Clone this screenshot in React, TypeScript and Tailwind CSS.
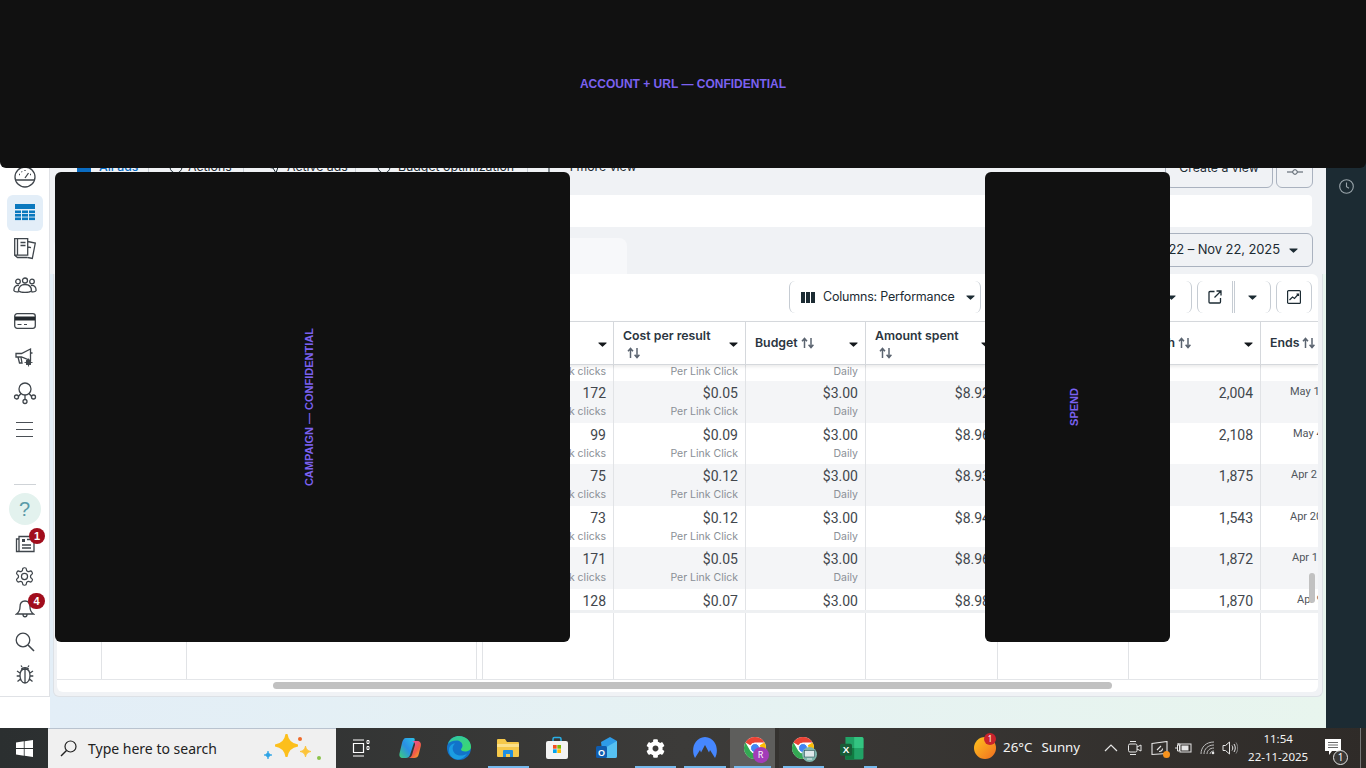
import React from 'react';
import { FaCog } from 'react-icons/fa';

const grid = 'grid grid-cols-[45px_85px_290px_6px_131px_132px_120px_132px_131px_132px_57px]';

const Caret = ({ className = '' }: { className?: string }) => (
  <svg width="9" height="5" viewBox="0 0 10 6" className={className}><path d="M0.6 0.5h8.8c.5 0 .7.5.4.9L5.5 5.4c-.3.3-.7.3-1 0L.2 1.4C-.1 1 .1.5.6.5z" fill="currentColor" /></svg>
);
const Sort = () => (
  <svg width="14" height="12" viewBox="0 0 14 12" className="shrink-0 text-[#5b6470]"><path d="M3.5 11V2M1 4.2 3.5 1.4 6 4.2M10 1v9M7.6 7.8 10 10.6l2.4-2.8" fill="none" stroke="currentColor" strokeWidth="1.5" /></svg>
);

const rows = [
  { a: '172', c: '$0.05', s: '$8.92', r: '2,004', e: 'May 1', p: 'pl-[29px]' },
  { a: '99', c: '$0.09', s: '$8.96', r: '2,108', e: 'May 4', p: 'pl-[32px]' },
  { a: '75', c: '$0.12', s: '$8.93', r: '1,875', e: 'Apr 2', p: 'pl-[30px]' },
  { a: '73', c: '$0.12', s: '$8.94', r: '1,543', e: 'Apr 20', p: 'pl-[29px]' },
  { a: '171', c: '$0.05', s: '$8.96', r: '1,872', e: 'Apr 1', p: 'pl-[31px]' },
];

const Cell = ({ main, sub, line = true }: { main?: string; sub?: string; line?: boolean }) => (
  <div className={`flex flex-col items-end pr-[7px] pt-[4px] overflow-hidden whitespace-nowrap ${line ? 'border-r border-[#e1e3e6]' : ''}`}>
    {main && <span className="font-['Roboto',sans-serif] text-[14px] leading-[16px] text-[#42474d]">{main}</span>}
    {sub && <span className="mt-[4px] text-[10.5px] leading-[14px] text-[#8a8f96]">{sub}</span>}
  </div>
);

const Row = ({ r, i }: { r: (typeof rows)[number]; i: number }) => (
  <div className={`${grid} ${i % 2 === 0 ? 'bg-[#f4f5f7]' : 'bg-white'} ${i % 2 === 0 ? 'h-[42px]' : 'h-[41px]'}`}>
    <div className="border-r border-[#e1e3e6]" /><div className="border-r border-[#e1e3e6]" /><div /><div className="bg-[#eceef0]" />
    <Cell main={r.a} sub="Link clicks" />
    <Cell main={r.c} sub="Per Link Click" />
    <Cell main="$3.00" sub="Daily" />
    <Cell main={r.s} />
    <Cell />
    <Cell main={r.r} />
    <div className={`${r.p} pt-[4px] font-['Roboto',sans-serif] text-[11px] leading-[14px] text-[#50555b] whitespace-nowrap overflow-hidden`}>{r.e}</div>
  </div>
);

const HeadCell = ({ label, two }: { label: string; two?: boolean }) => (
  <div className="flex items-center justify-between pl-[9px] pr-[7px] border-r border-[#d5d8dc] overflow-hidden whitespace-nowrap">
    {two ? (
      <div className="flex flex-col gap-[3px] pt-px">
        <span className="text-[12.3px] leading-[16px] font-semibold text-[#2b3540]">{label}</span>
        <span className="pl-[4px]"><Sort /></span>
      </div>
    ) : (
      <div className="flex items-center gap-[3px]">
        <span className="text-[12.3px] leading-[16px] font-semibold text-[#2b3540]">{label}</span>
        <Sort />
      </div>
    )}
    <Caret className="mt-[3px] shrink-0 text-[#14181c]" />
  </div>
);

const S = 'fill-none stroke-[#3f454b] stroke-[1.3]';

const Sidebar = () => (
  <div className="w-[50px] shrink-0 bg-white flex flex-col">
    <div className="h-[697px] border-b border-r border-[#e0e2e6] flex flex-col items-center pt-[159px]">
      <div className="h-[36px] w-full flex items-center justify-center">
        <svg width="22" height="22" viewBox="0 0 22 22" className={S}><circle cx="11" cy="11" r="10" /><path d="M2 14h18M11 12l3.5-5M5 8.5h1M7.5 5.5l.6.6M11 4v1M17 8.5h-1" /></svg>
      </div>
      <div className="h-[36px] w-[36px] flex items-center justify-center rounded-md bg-[#e3eef8]">
        <svg width="20" height="18" viewBox="0 0 20 18"><rect x="0" y="0" width="20" height="5" fill="#0a78be" />
          {[6.5, 10, 13.5].map((y) => [0, 7, 14].map((x) => <rect key={`${x}${y}`} x={x} y={y} width="6" height="2.6" fill="#0a78be" />))}
        </svg>
      </div>
      <div className="h-[36px] w-full flex items-center justify-center">
        <svg width="22" height="22" viewBox="0 0 22 22" className={S}><path d="M.7.7h13v16.500h-13zM3.500.7v16.500M.7 17.200 3.500 19.500h10M13.700 3.500l7.600 1.500-3 15.500-4.600-1M6.500 4.500h5M6.500 7.500h5M14 9l3 .7" /></svg>
      </div>
      <div className="h-[36px] w-full flex items-center justify-center">
        <svg width="24" height="16" viewBox="0 0 24 16" className={S}><circle cx="5" cy="4.500" r="2.300" /><circle cx="12" cy="3.500" r="2.500" /><circle cx="19" cy="4.500" r="2.300" /><path d="M1 14c-.5-4 2-6 5-5.500M23 14c.5-4-2-6-5-5.500M5.500 14c0-5 3-6.500 6.500-6.500s6.500 1.500 6.500 6.500c-3 2-10 2-13 0zM1 14c1 .8 2.500 1 4.500 1M23 14c-1 .8-2.500 1-4.500 1" /></svg>
      </div>
      <div className="h-[36px] w-full flex items-center justify-center">
        <svg width="22" height="16" viewBox="0 0 22 16"><rect x=".7" y=".7" width="20.600" height="14.600" rx="2.500" fill="none" stroke="#3f454b" strokeWidth="1.300" /><rect x="1" y="3.500" width="20" height="4" fill="#23282d" /><path d="M3.500 11.500h4M10 11.500h3" stroke="#3f454b" strokeWidth="1" /></svg>
      </div>
      <div className="h-[36px] w-full flex items-center justify-center">
        <svg width="20" height="20" viewBox="0 0 20 20" className={S}><path d="M1 6.500h5.500L15.500 2v11.500l-9-3.500H1zM3 10l1.500 6h2.500L6 10.500M15.500 6h2" /><circle cx="13.500" cy="15.500" r="2" fill="#3f454b" /><path d="M13.500 11.500v8M9.500 15.500h8M11 13l5 5M16 13l-5 5" strokeWidth=".9" /></svg>
      </div>
      <div className="h-[36px] w-full flex items-center justify-center">
        <svg width="24" height="24" viewBox="0 0 24 24" className={S}><circle cx="12" cy="8" r="6" /><circle cx="3.500" cy="16" r="2" /><circle cx="20.500" cy="16" r="2" /><circle cx="12" cy="20.500" r="2" /><path d="M5.400 15.500 8 12.500M18.600 15.500 16 12.500M12 14v4.500" /></svg>
      </div>
      <div className="h-[36px] w-full flex items-center justify-center">
        <svg width="17" height="15" viewBox="0 0 17 15" className="fill-none stroke-[#4a4f55] stroke-[1]"><path d="M0 .5h17M0 7.500h17M0 14.500h17" /></svg>
      </div>
      <div className="h-[37px] shrink-0" />
      <div className="h-px w-[22px] bg-[#cfd3d7] shrink-0" />
      <div className="mt-[8px] h-[32px] w-[32px] shrink-0 rounded-full bg-[#e3f2ee] flex items-center justify-center text-[20px] leading-none font-normal text-[#5a9aa8] font-['Liberation_Sans',sans-serif]">?</div>
      <div className="mt-[3px] h-[32.5px] w-full relative flex items-center justify-center">
        <svg width="20" height="18" viewBox="0 0 20 18" className={S}><path d="M4 3.500V1.500h15v15H4zM4 4H1.500v12.500H4" /><rect x="7" y="4" width="3" height="3" fill="#3f454b" stroke="none" /><path d="M7 10h9M7 13h9M12 4.500h4" /></svg>
        <span className="absolute left-[29px] top-[0px] w-[16px] h-[16px] rounded-full bg-[#a10d1c] text-white text-[11px] leading-[16px] font-bold text-center font-['Liberation_Sans',sans-serif]">1</span>
      </div>
      <div className="h-[32.5px] w-full flex items-center justify-center">
        <svg width="21" height="21" viewBox="0 0 24 24" className="fill-none stroke-[#3f454b] stroke-[1.400]"><path d="M12.220 2h-.44a2 2 0 0 0-2 2v.18a2 2 0 0 1-1 1.730l-.43.250a2 2 0 0 1-2 0l-.15-.080a2 2 0 0 0-2.730.730l-.220.380a2 2 0 0 0 .730 2.730l.150.100a2 2 0 0 1 1 1.720v.510a2 2 0 0 1-1 1.740l-.150.090a2 2 0 0 0-.730 2.730l.220.380a2 2 0 0 0 2.730.730l.150-.080a2 2 0 0 1 2 0l.430.250a2 2 0 0 1 1 1.730V20a2 2 0 0 0 2 2h.440a2 2 0 0 0 2-2v-.180a2 2 0 0 1 1-1.730l.430-.250a2 2 0 0 1 2 0l.150.080a2 2 0 0 0 2.730-.730l.220-.390a2 2 0 0 0-.730-2.730l-.150-.080a2 2 0 0 1-1-1.740v-.500a2 2 0 0 1 1-1.740l.150-.090a2 2 0 0 0 .730-2.730l-.220-.380a2 2 0 0 0-2.730-.730l-.150.080a2 2 0 0 1-2 0l-.430-.250a2 2 0 0 1-1-1.730V4a2 2 0 0 0-2-2z" /><circle cx="12" cy="12" r="3.500" /></svg>
      </div>
      <div className="h-[32.5px] w-full relative flex items-center justify-center">
        <svg width="20" height="20" viewBox="0 0 20 20" className={S}><path d="M10 2c-3.500 0-5 2.500-5 6 0 4-2 6-3.500 7h17c-1.500-1-3.500-3-3.500-7 0-3.500-1.500-6-5-6zM8 15.500c0 3 4 3 4 0" /></svg>
        <span className="absolute left-[28px] top-[0px] w-[17px] h-[16px] rounded-full bg-[#a10d1c] text-white text-[11px] leading-[16px] font-bold text-center font-['Liberation_Sans',sans-serif]">4</span>
      </div>
      <div className="h-[32.5px] w-full flex items-center justify-center">
        <svg width="20" height="20" viewBox="0 0 20 20" className={S}><circle cx="8" cy="8" r="6.800" /><path d="m13 13 6 6" strokeWidth="1.600" /></svg>
      </div>
      <div className="h-[32.5px] w-full flex items-center justify-center">
        <svg width="18" height="20" viewBox="0 0 18 20" className={S}><path d="M9 5c-3.500 0-5 2.500-5 6.500S6 19 9 19s5-3.500 5-7.500S12.500 5 9 5zM9 5v14M5.500 5.500C6 3 12 3 12.500 5.500M6 3 5 1.500M12 3l1-1.500M4 9 1 7M14 9l3-2M4 12H.7M14 12h3.300M4.500 15 1.500 17.500M13.500 15l3 2.500" /></svg>
      </div>
    </div>
  </div>
);

const TabItem = ({ w, label, blue, icon }: { w: string; label: string; blue?: boolean; icon: React.ReactNode }) => (
  <div className={`${w} h-[24px] flex items-center border-r border-[#c9ced6] whitespace-nowrap text-[12.3px] ${blue ? 'text-[#0a6cc2] font-medium' : 'text-[#1c2b33]'}`}>{icon}<span>{label}</span></div>
);

const Center = () => (
  <div className="w-[1276px] shrink-0 h-[728px] flex flex-col bg-linear-to-r from-[#e3eef7] to-[#e8f5ee]">
    <div className="h-[274px] shrink-0 bg-[#f0f2f5] flex flex-col">
      <div className="h-[155px] shrink-0" />
      <div className="h-[33px] shrink-0 flex items-start pl-[27px]">
        <TabItem w="w-[72px]" label="All ads" blue icon={<svg width="14" height="14" viewBox="0 0 14 14" className="mr-[8px]"><rect width="14" height="14" rx="2" fill="#0a6cc2" /></svg>} />
        <TabItem w="w-[95px] pl-[20px]" label="Actions" icon={<svg width="14" height="14" viewBox="0 0 14 14" className="mr-[5px] fill-none stroke-[#1c2b33]"><circle cx="7" cy="7" r="6" /></svg>} />
        <TabItem w="w-[112px] pl-[21px]" label="Active ads" icon={<svg width="16" height="14" viewBox="0 0 16 14" className="mr-[6px] fill-none stroke-[#1c2b33]"><path d="M1 7 15 1l-4 12-3-5z" /></svg>} />
        <TabItem w="w-[172px] pl-[20px]" label="Budget optimization" icon={<svg width="16" height="14" viewBox="0 0 16 14" className="mr-[6px] fill-none stroke-[#1c2b33]"><circle cx="8" cy="7" r="6" /></svg>} />
        <div className="h-[24px] pl-[15px] flex items-center gap-[13px] text-[12.3px] text-[#1c2b33] whitespace-nowrap">
          <svg width="12" height="12" viewBox="0 0 12 12" className="fill-none stroke-[#1c2b33]"><path d="M6 0v12M0 6h12" /></svg><span>1 more view</span>
        </div>
        <div className="ml-auto flex items-start">
          <div className="h-[33px] w-[108px] rounded-md border border-[#aab2bf] flex items-center justify-center pb-[6px] text-[12.3px] text-[#1c2b33]">Create a view</div>
          <div className="ml-[3px] mr-[13px] h-[33px] w-[37px] rounded-md border border-[#aab2bf] flex items-center justify-center">
            <svg width="16" height="8" viewBox="0 0 16 8" className="fill-none stroke-[#4a5560]"><path d="M0 4h5.500M10.500 4H16" /><circle cx="8" cy="4" r="2.300" /></svg>
          </div>
        </div>
      </div>
      <div className="h-[7px] shrink-0" />
      <div className="h-[32px] shrink-0 ml-[5px] mr-[14px] bg-white rounded-sm" />
      <div className="h-[47px] shrink-0 flex justify-between">
        <div className="self-end ml-[4px] w-[573px] h-[36px] rounded-t-lg bg-[#f7f8fa]" />
        <div className="mt-[6px] mr-[13px] h-[34px] w-[328px] rounded-md border border-[#aab2bf] flex items-center justify-end pr-[14px] gap-[9px] text-[13px] tracking-[-0.1px] text-[#1c2b33] whitespace-nowrap">
          <span>Jan 1, 2022 – Nov 22, 2025</span><Caret className="text-[#1c2b33]" />
        </div>
      </div>
    </div>
    <div className="h-[423px] shrink-0 ml-[3px] w-[1270px] bg-[#f0f2f5] border-x border-b border-[#dde1e6] rounded-b-md pl-[3px] pr-[4px] pb-[4px]">
      <div className="relative h-[418px] w-[1261px] bg-white rounded-t-md rounded-b-md overflow-hidden flex flex-col">
        <div className="h-[47px] shrink-0 pb-[1px] flex items-center justify-end pr-[6px] gap-[5px] text-[12.5px] tracking-[-0.2px] text-[#1c2b33]">
          <div className="w-[192px] h-[32px] shrink-0 rounded-md border-x border-[#c6ccd3] flex items-center pl-[11px] gap-[8px] whitespace-nowrap">
            <svg width="14" height="11" viewBox="0 0 14 11" className="fill-[#1c2b33] shrink-0"><rect width="4" height="11" /><rect x="5" width="4" height="11" /><rect x="10" width="4" height="11" /></svg>
            <span>Columns: Performance</span>
            <Caret className="ml-[3px] text-[#1c2b33]" />
          </div>
          <div className="w-[206px] h-[32px] shrink-0 rounded-md border-x border-[#c6ccd3] flex items-center justify-end pr-[15px]"><Caret className="text-[#1c2b33]" /></div>
          <div className="w-[74px] h-[32px] shrink-0 rounded-md border-x border-[#c6ccd3] flex items-center">
            <div className="w-[37px] h-full flex items-center justify-center border-r-[3px] border-double border-[#c6ccd3]">
              <svg width="14" height="14" viewBox="0 0 14 14" className="fill-none stroke-[#1c2b33] stroke-[1.300]"><path d="M6.500 1.500H2a1 1 0 0 0-1 1V12a1 1 0 0 0 1 1h9.500a1 1 0 0 0 1-1V8M8.500 1H13v4.500M13 1 6.500 7.500" /></svg>
            </div>
            <div className="flex-1 flex items-center justify-center"><Caret className="text-[#1c2b33]" /></div>
          </div>
          <div className="w-[36px] h-[32px] shrink-0 rounded-md border-x border-[#c6ccd3] flex items-center justify-center">
            <svg width="14" height="14" viewBox="0 0 14 14" className="fill-none stroke-[#1c2b33] stroke-[1.200]"><rect x=".6" y=".6" width="12.800" height="12.800" rx="1" /><path d="m2.500 10 3-3 2 1.500 4-4.500M9.500 4h2v2" /></svg>
          </div>
        </div>
        <div className={`${grid} h-[44px] shrink-0 border-y border-[#d5d8dc] shadow-[0_2px_3px_rgba(0,0,0,0.08)] z-10 bg-white`}>
          <div className="border-r border-[#d5d8dc]" /><div className="border-r border-[#d5d8dc]" /><div /><div className="bg-[#eceef0]" />
          <div className="flex items-center justify-end pr-[6px] border-r border-[#d5d8dc]"><Caret className="mt-[3px] text-[#14181c]" /></div>
          <HeadCell label="Cost per result" two />
          <HeadCell label="Budget" />
          <HeadCell label="Amount spent" two />
          <HeadCell label="Impressions" />
          <HeadCell label="Reach" />
          <div className="flex items-center pl-[9px] gap-[3px] overflow-hidden"><span className="text-[12.3px] font-semibold text-[#2b3540]">Ends</span><Sort /></div>
        </div>
        <div className={`${grid} h-[16px] shrink-0 overflow-hidden bg-white`}>
          <div className="border-r border-[#e1e3e6]" /><div className="border-r border-[#e1e3e6]" /><div /><div className="bg-[#eceef0]" />
          {['Link clicks', 'Per Link Click', 'Daily', '', '', ''].map((t, i) => (
            <div key={i} className="border-r border-[#e1e3e6] flex items-end justify-end pr-[7px] pb-[4px] text-[10.5px] leading-[14px] text-[#8a8f96] whitespace-nowrap">{t}</div>
          ))}
          <div />
        </div>
        {rows.map((r, i) => <Row key={i} r={r} i={i} />)}
        <div className={`${grid} h-[21px] shrink-0 bg-white overflow-hidden`}>
          <div className="border-r border-[#e1e3e6]" /><div className="border-r border-[#e1e3e6]" /><div /><div className="bg-[#eceef0]" />
          <Cell main="128" />
          <Cell main="$0.07" />
          <Cell main="$3.00" />
          <Cell main="$8.98" />
          <Cell />
          <Cell main="1,870" />
          <div className="pl-[36px] pt-[4px] font-['Roboto',sans-serif] text-[11px] leading-[14px] text-[#50555b] whitespace-nowrap overflow-hidden">Apr 9</div>
        </div>
        <div className={`${grid} h-[69px] shrink-0 border-t-3 border-t-[#eef0f2]`}>
          <div className="border-r border-[#e1e3e6]" /><div className="border-r border-[#e1e3e6]" /><div className="border-r border-[#e1e3e6]" /><div className="border-r border-[#e1e3e6]" />
          <div className="border-r border-[#e1e3e6]" /><div className="border-r border-[#e1e3e6]" /><div className="border-r border-[#e1e3e6]" /><div className="border-r border-[#e1e3e6]" /><div className="border-r border-[#e1e3e6]" /><div className="border-r border-[#e1e3e6]" /><div />
        </div>
        <div className="flex-1 border-t border-[#e4e6e9] pt-[2px] pl-[216px]">
          <div className="h-[7px] w-[839px] rounded-full bg-[#c1c1c1]" />
        </div>
        <div className="absolute left-[1252px] top-[299px] w-[6px] h-[30px] rounded-full bg-[#c1c1c1] z-20" />
      </div>
    </div>
  </div>
);

const Star = ({ s, c }: { s: number; c: string }) => (
  <svg width={s} height={s} viewBox="0 0 24 24"><path d="M12 0C13 7 17 11 24 12 17 13 13 17 12 24 11 17 7 13 0 12 7 11 11 7 12 0Z" fill={c} stroke={c} strokeWidth="2" strokeLinejoin="round" /></svg>
);

const Chrome = () => (
  <svg width="24" height="24" viewBox="0 0 24 24">
    <circle cx="12" cy="12" r="11" fill="#fff" />
    <path d="M2.470 6.500A11 11 0 0 1 21.530 6.500L12 6.500A5.500 5.500 0 0 0 7.240 9.250Z" fill="#ea4335" />
    <path d="M2.470 6.500A11 11 0 0 1 21.530 6.500L12 6.500A5.500 5.500 0 0 0 7.240 9.250Z" fill="#fbbc04" transform="rotate(120 12 12)" />
    <path d="M2.470 6.500A11 11 0 0 1 21.530 6.500L12 6.500A5.500 5.500 0 0 0 7.240 9.250Z" fill="#34a853" transform="rotate(240 12 12)" />
    <circle cx="12" cy="12" r="4.500" fill="#4285f4" stroke="#fff" strokeWidth="1" />
  </svg>
);

const Slot = ({ children, bar, active }: { children: React.ReactNode; bar?: string; active?: boolean }) => (
  <div className={`w-[49.2px] h-full shrink-0 relative flex items-center justify-center ${active ? 'bg-[#5e5e5c] border-r-[4px] border-[#34322f]' : ''}`}>
    {children}
    {bar && <span className={`absolute bottom-0 left-[4px] right-[4px] h-[2px] ${bar}`} />}
  </div>
);

const Taskbar = () => (
  <div className="h-[40px] shrink-0 bg-linear-to-r from-[#2b2f30] via-[#3c3b39] to-[#2f2b28] flex items-stretch text-white font-['Noto_Sans',sans-serif]">
    <div className="w-[48px] flex items-center justify-center">
      <svg width="17" height="17" viewBox="0 0 17 17" fill="#fff"><path d="M0 2.400 7.800 1.300v6.800H0zM8.600 1.200 17 0v8.100H8.600zM0 8.900h7.800v6.800L0 14.600zM8.600 8.900H17V17l-8.400-1.200z" /></svg>
    </div>
    <div className="w-[288px] bg-[#f0f0f0] border-t border-[#b9c3cf] flex items-center pl-[12px] text-[#222]">
      <svg width="17" height="17" viewBox="0 0 17 17" fill="none" stroke="#222" strokeWidth="1.200"><circle cx="10.500" cy="6.500" r="5.500" /><path d="M6.500 10.500 1 16" strokeWidth="1.500" /></svg>
      <span className="ml-[11px] text-[14px] whitespace-nowrap">Type here to search</span>
      <div className="relative ml-auto w-[74px] h-full">
        <span className="absolute left-[2px] top-[22px] flex"><Star s={8} c="#2ea3e6" /></span>
        <span className="absolute left-[13px] top-[5px] flex"><Star s={23} c="#fcbf1c" /></span>
        <span className="absolute left-[38px] top-[17px] flex"><Star s={11} c="#fcc43a" /></span>
        <span className="absolute left-[36px] top-[8px] w-[4px] h-[4px] rounded-full bg-[#ef6a2a]" />
        <span className="absolute left-[55px] top-[27px] w-[4px] h-[4px] rounded-full bg-[#8bc34a]" />
      </div>
    </div>
    <Slot>
      <svg width="18" height="18" viewBox="0 0 18 18" fill="none" stroke="#fff" strokeWidth="1.200"><path d="M1 1h11M1 17h11M1.500 4.500h10v9h-10z" /><path d="M15 1.500h2v3h-2zM15 7.500h2v3h-2z" strokeWidth="1" /></svg>
    </Slot>
    <Slot>
      <svg width="24" height="24" viewBox="0 0 24 24">
        <defs>
          <linearGradient id="cpa" x1="0" y1="1" x2="1" y2="0"><stop offset="0" stopColor="#3ecf7a" /><stop offset=".5" stopColor="#2a8fe6" /><stop offset="1" stopColor="#2dc3e8" /></linearGradient>
          <linearGradient id="cpb" x1="0" y1="0" x2="1" y2="1"><stop offset="0" stopColor="#e64ad0" /><stop offset=".6" stopColor="#f05a48" /><stop offset="1" stopColor="#fbbc1c" /></linearGradient>
        </defs>
        <path d="M8 2h7c2 0 2 1.500 1.500 3L12 19c-.6 2-2 3-4 3H5c-3 0-4-2-3.500-4.500L4 7c.7-3 2-5 4-5z" fill="url(#cpa)" />
        <path d="M13 5h6c3 0 4.500 2 3.800 5l-2 8c-.6 3-2.500 4-4.800 4H10c2 0 3.200-1 4-3l3-10c.4-1.600-1-4-4-4z" fill="url(#cpb)" />
      </svg>
    </Slot>
    <Slot>
      <svg width="26" height="26" viewBox="0 0 26 26">
        <defs><linearGradient id="edg" x1="0" y1="0" x2="1" y2="1"><stop offset="0" stopColor="#2fc4a8" /><stop offset="1" stopColor="#3ddc68" /></linearGradient></defs>
        <circle cx="13" cy="13" r="12" fill="#1273c9" />
        <path d="M2 9C4 3 9 1 13 1c7 0 12 5 12 11 0 3-3 4.500-6 4.500-2 0-4-.8-4-2 0-1 1.500-1.500 1.500-4 0-3-3-5-6-5-4 0-7 1.500-8.500 3.500z" fill="url(#edg)" />
        <path d="M9 24c-4-1.500-6-5-6-9 0-4 3-6.500 6-6.500-2 2-3 4-2 7 1 3.500 5 5.500 9 5 2-.2 4-1 5-2-2 4-7 7-12 5.500z" fill="#1b9de2" />
      </svg>
    </Slot>
    <Slot bar="bg-[#76b9ed]">
      <svg width="24" height="22" viewBox="0 0 24 22"><path d="M1 3a1 1 0 0 1 1-1h7l2 3h11a1 1 0 0 1 1 1v13a1 1 0 0 1-1 1H2a1 1 0 0 1-1-1z" fill="#f5c84a" /><path d="M1 7h22v3H1z" fill="#fbe08a" /><path d="M7 20v-6a1 1 0 0 1 1-1h8a1 1 0 0 1 1 1v6h-3v-3h-4v3z" fill="#1f8ee0" /></svg>
    </Slot>
    <Slot>
      <svg width="24" height="24" viewBox="0 0 24 24"><path d="M8 6V3a1.500 1.500 0 0 1 1.500-1.500h5A1.500 1.500 0 0 1 16 3v3" fill="none" stroke="#2ab0e8" strokeWidth="1.500" /><rect x="1" y="5" width="22" height="18" rx="2" fill="#f3f3f3" /><rect x="8" y="9" width="3.700" height="3.700" fill="#f25022" /><rect x="12.300" y="9" width="3.700" height="3.700" fill="#7fba00" /><rect x="8" y="13.300" width="3.700" height="3.700" fill="#00a4ef" /><rect x="12.300" y="13.300" width="3.700" height="3.700" fill="#ffb900" /></svg>
    </Slot>
    <Slot>
      <svg width="24" height="24" viewBox="0 0 24 24"><path d="M6 6 15 1l7 4v15a2 2 0 0 1-2 2H8z" fill="#2e9ce8" /><path d="M8 13 22 5v15a2 2 0 0 1-2 2H8z" fill="#56c1f2" /><rect x="1" y="10" width="11" height="12" rx="1.500" fill="#0f5cae" /><text x="6.500" y="19.500" textAnchor="middle" fontSize="9" fontWeight="700" fill="#fff" fontFamily="Liberation Sans, sans-serif">O</text></svg>
    </Slot>
    <Slot bar="bg-[#76b9ed]"><FaCog size={19} color="#fff" /></Slot>
    <Slot bar="bg-[#76b9ed]">
      <svg width="26" height="24" viewBox="0 0 26 24"><path d="M3 22C-1 15 1 2 13 1c12 1 14 14 10 21l-5-8-1 2.500-4-7.500-4 7.500-1-2.500z" fill="#4687ff" /></svg>
    </Slot>
    <Slot bar="bg-[#76b9ed]" active>
      <span className="relative flex ml-[6px] mr-[-1px] pr-[2px]"><Chrome />
        <span className="absolute left-[10px] top-[11px] w-[16px] h-[16px] rounded-full bg-[#a23cb8] text-[9px] leading-[16px] text-center text-white">R</span>
      </span>
    </Slot>
    <Slot bar="bg-[#76b9ed]">
      <span className="relative flex ml-[2px] pr-[2px]"><Chrome />
        <span className="absolute left-[11px] top-[11px] w-[15px] h-[15px] rounded-full bg-[#7fb6ad] flex items-center justify-center">
          <svg width="11" height="10" viewBox="0 0 11 10"><rect x=".5" y=".5" width="10" height="6.500" fill="#dfe8ea" stroke="#33575a" strokeWidth=".6" /><path d="M3 9h5" stroke="#e7eeef" /></svg>
        </span>
      </span>
    </Slot>
    <Slot>
      <svg width="24" height="24" viewBox="0 0 22 22"><path d="M5 1h15a1.500 1.500 0 0 1 1.500 1.500V20a1.500 1.500 0 0 1-1.500 1.500H5z" fill="#21a366" /><path d="M13 1h7a1.500 1.500 0 0 1 1.500 1.500V11H13z" fill="#33c481" /><path d="M5 11h8v10.500H5z" fill="#107c41" /><rect x="0" y="7" width="11" height="11" rx="1.500" fill="#185c37" /><text x="5.500" y="15.800" textAnchor="middle" fontSize="9" fontWeight="700" fill="#fff" fontFamily="Liberation Sans, sans-serif">X</text></svg>
      <span className="absolute bottom-0 left-[36px] right-0 h-[2px] bg-[#76b9ed]" />
    </Slot>
    <div className="w-[97px] shrink-0" />
    <div className="flex items-center text-[13.3px] whitespace-nowrap text-[#f3f3f3]">
      <span className="relative w-[22px] h-[22px] rounded-full bg-linear-to-br from-[#fdc41c] to-[#ef6c20]">
        <span className="absolute left-[10px] top-[-4px] w-[12px] h-[12px] rounded-full bg-[#c9232c] text-[8px] leading-[12px] text-center text-white">1</span>
      </span>
      <span className="ml-[7px]">26°C</span>
      <span className="ml-[9px]">Sunny</span>
    </div>
    <div className="ml-[22px] flex items-center gap-[6px]">
      <span className="w-[18px] flex justify-center"><svg width="14" height="8" viewBox="0 0 14 8" fill="none" stroke="#e6e6e6" strokeWidth="1.200"><path d="m1 7 6-6 6 6" /></svg></span>
      <span className="w-[18px] flex justify-center"><svg width="16" height="16" viewBox="0 0 16 16" fill="none" stroke="#e6e6e6" strokeWidth="1"><rect x="1.500" y="4" width="8.500" height="8" rx="1.500" /><path d="m10 7 4-2v6l-4-2M3 1.500h6M3 14.500h6" /></svg></span>
      <span className="w-[18px] flex justify-center"><span className="relative flex"><svg width="17" height="15" viewBox="0 0 17 15" fill="none" stroke="#e6e6e6" strokeWidth="1.100"><path d="M1 2.500 16 .5v12l-15 1z" /><path d="M6 9 10 5M8 10.500c2 0 3.500-1 3.500-3" /></svg><span className="absolute right-[-2px] bottom-[-2px] w-[7px] h-[7px] rounded-full bg-[#f7931e]" /></span></span>
      <span className="w-[18px] flex justify-center"><svg width="17" height="12" viewBox="0 0 17 12" fill="none" stroke="#e6e6e6" strokeWidth="1"><rect x="5" y="2" width="11" height="8" /><rect x="6.500" y="3.500" width="7" height="5" fill="#e6e6e6" stroke="none" /><path d="M0 6h3M2.500 3v6h2V3zM3 1v2M4 1v2" /></svg></span>
      <span className="w-[18px] flex justify-center"><svg width="15" height="14" viewBox="0 0 15 14" fill="none" stroke="#bdbdbd" strokeWidth="1"><path d="M1 13C1 6 6 1 14 1M4 13c0-5 4-9 10-9M7 13c0-3 2.500-6 7-6M10 13c0-1.500 1.500-3 4-3" /><circle cx="13" cy="12" r="1.300" fill="#e6e6e6" stroke="none" /></svg></span>
      <span className="w-[16px] flex justify-center"><svg width="16" height="14" viewBox="0 0 16 14" fill="none" stroke="#e6e6e6" strokeWidth="1"><path d="M1 4.500h2.500L7.500 1v12L3.500 9.500H1z" /><path d="M10 4.500c1 1.500 1 3.500 0 5M12 3c1.700 2.500 1.700 5.500 0 8" /><path d="M14 1.500c2.300 3.500 2.300 7.500 0 11" stroke="#8a8a8a" /></svg></span>
    </div>
    <div className="ml-[5px] w-[70px] flex flex-col items-center justify-center text-[11.5px] leading-[18px] text-[#f3f3f3] whitespace-nowrap">
      <span>11:54</span><span>22-11-2025</span>
    </div>
    <div className="relative ml-[12px] flex-1 border-r border-[#777] mr-[5px]">
      <svg width="17" height="17" viewBox="0 0 17 17" className="absolute left-0 top-[11px]"><path d="M0 0h16v12H7l-3 4v-4H0z" fill="#fff" /><path d="M3 3.500h10M3 6h10M3 8.500h10" stroke="#444" strokeWidth=".8" /></svg>
      <span className="absolute left-[8px] top-[22px] w-[15px] h-[15px] rounded-full border border-[#e6e6e6] bg-[#3a3836] text-[10px] leading-[13px] text-center">1</span>
    </div>
  </div>
);

export default function App() {
  return (
    <div className="relative w-[1366px] h-[768px] overflow-hidden flex flex-col font-['Inter',sans-serif]">
      <div className="h-[728px] shrink-0 flex">
        <Sidebar />
        <Center />
        <div className="flex-1 bg-[#1c2b33] flex justify-center pt-[179px]">
          <svg width="15" height="15" viewBox="0 0 15 15" fill="none" stroke="#9aa5ab" strokeWidth="1.100"><circle cx="7.500" cy="7.500" r="6.800" /><path d="M7.500 3.500v4.300l2.500 1.500" /></svg>
        </div>
      </div>
      <Taskbar />
      <div className="absolute left-0 top-0 w-[1366px] h-[168px] rounded-b-md bg-[#111111] flex items-center justify-center z-30 font-['Liberation_Sans',sans-serif] text-[12px] font-bold text-[#7b61f0]">ACCOUNT + URL — CONFIDENTIAL</div>
      <div className="absolute left-[55px] top-[172px] w-[515px] h-[470px] rounded-md bg-[#111111] flex items-center justify-center z-30 font-['Liberation_Sans',sans-serif] text-[11px] font-bold text-[#7b61f0]">
        <span className="[writing-mode:vertical-rl] rotate-180 mr-[7px] whitespace-nowrap">CAMPAIGN — CONFIDENTIAL</span>
      </div>
      <div className="absolute left-[985px] top-[172px] w-[185px] h-[470px] rounded-md bg-[#111111] flex items-center justify-center z-30 font-['Liberation_Sans',sans-serif] text-[11px] font-bold text-[#7b61f0]">
        <span className="[writing-mode:vertical-rl] rotate-180 mr-[7px] whitespace-nowrap">SPEND</span>
      </div>
    </div>
  );
}
